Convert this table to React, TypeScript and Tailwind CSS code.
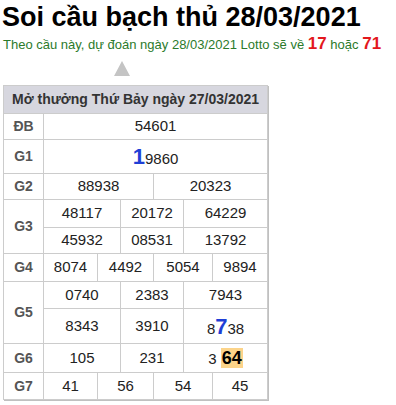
import React from 'react';

const cell = 'border border-[#cccccc] text-center text-[15px] text-[#222]';
const label = 'border border-[#cccccc] text-center text-[14px] font-bold text-[#555]';

export default function App() {
    return (
        <div className="bg-white w-[396px] h-[405px] pl-[2px] font-['Liberation_Sans',Arial,sans-serif]">
            <h1 className="text-[27px] leading-[31px] font-bold text-black pt-[2px]">Soi cầu bạch thủ 28/03/2021</h1>
            <p className="text-[13px] leading-[20px] text-[#2b7a2b] pl-px mt-[1px]">
                Theo cầu này, dự đoán ngày 28/03/2021 Lotto sẽ về{' '}
                <span className="text-[17px] font-bold text-[#e3171d]">17</span> hoặc{' '}
                <span className="text-[17px] font-bold text-[#e3171d]">71</span>
            </p>
            {/* pointer above the table */}
            <div className="ml-[112px] mt-[6px] w-0 h-0 border-l-[8px] border-r-[8px] border-b-[15px] border-l-transparent border-r-transparent border-b-[#c4c4c4]" />
            <table className="mt-[9px] ml-px w-[264px] table-fixed border-collapse shadow-[1px_1px_0_#c0c0c0]">
                <colgroup>
                    <col className="w-[40px]" />
                    <col className="w-[54px]" />
                    <col className="w-[23px]" />
                    <col className="w-[33px]" />
                    <col className="w-[30px]" />
                    <col className="w-[29px]" />
                    <col className="w-[55px]" />
                </colgroup>
                <tbody>
                    <tr className="h-[28px]">
                        <td colSpan={7} className="border border-[#cccccc] bg-[#d7d7df] text-center text-[14px] font-bold text-[#333]">
                            Mở thưởng Thứ Bảy ngày 27/03/2021
                        </td>
                    </tr>
                    <tr className="h-[26px]">
                        <td className={label}>ĐB</td>
                        <td colSpan={6} className={cell}>54601</td>
                    </tr>
                    <tr className="h-[34px]">
                        <td className={label}>G1</td>
                        <td colSpan={6} className={cell}>
                            <span className="text-[22px] font-bold text-[#1f3fd6]">1</span>9860
                        </td>
                    </tr>
                    <tr className="h-[26px]">
                        <td className={label}>G2</td>
                        <td colSpan={3} className={cell}>88938</td>
                        <td colSpan={3} className={cell}>20323</td>
                    </tr>
                    <tr className="h-[28px]">
                        <td rowSpan={2} className={label}>G3</td>
                        <td colSpan={2} className={cell}>48117</td>
                        <td colSpan={2} className={cell}>20172</td>
                        <td colSpan={2} className={cell}>64229</td>
                    </tr>
                    <tr className="h-[26px]">
                        <td colSpan={2} className={cell}>45932</td>
                        <td colSpan={2} className={cell}>08531</td>
                        <td colSpan={2} className={cell}>13792</td>
                    </tr>
                    <tr className="h-[28px]">
                        <td className={label}>G4</td>
                        <td className={cell}>8074</td>
                        <td colSpan={2} className={cell}>4492</td>
                        <td colSpan={2} className={cell}>5054</td>
                        <td className={cell}>9894</td>
                    </tr>
                    <tr className="h-[27px]">
                        <td rowSpan={2} className={label}>G5</td>
                        <td colSpan={2} className={cell}>0740</td>
                        <td colSpan={2} className={cell}>2383</td>
                        <td colSpan={2} className={cell}>7943</td>
                    </tr>
                    <tr className="h-[35px]">
                        <td colSpan={2} className={cell}>8343</td>
                        <td colSpan={2} className={cell}>3910</td>
                        <td colSpan={2} className={cell}>
                            8<span className="text-[22px] font-bold text-[#1f3fd6]">7</span>38
                        </td>
                    </tr>
                    <tr className="h-[29px]">
                        <td className={label}>G6</td>
                        <td colSpan={2} className={cell}>105</td>
                        <td colSpan={2} className={cell}>231</td>
                        <td colSpan={2} className={cell}>
                            3 <span className="text-[18px] font-bold text-black bg-[#fcd48a] px-px">64</span>
                        </td>
                    </tr>
                    <tr className="h-[27px]">
                        <td className={label}>G7</td>
                        <td className={cell}>41</td>
                        <td colSpan={2} className={cell}>56</td>
                        <td colSpan={2} className={cell}>54</td>
                        <td className={cell}>45</td>
                    </tr>
                </tbody>
            </table>
        </div>
    );
}
